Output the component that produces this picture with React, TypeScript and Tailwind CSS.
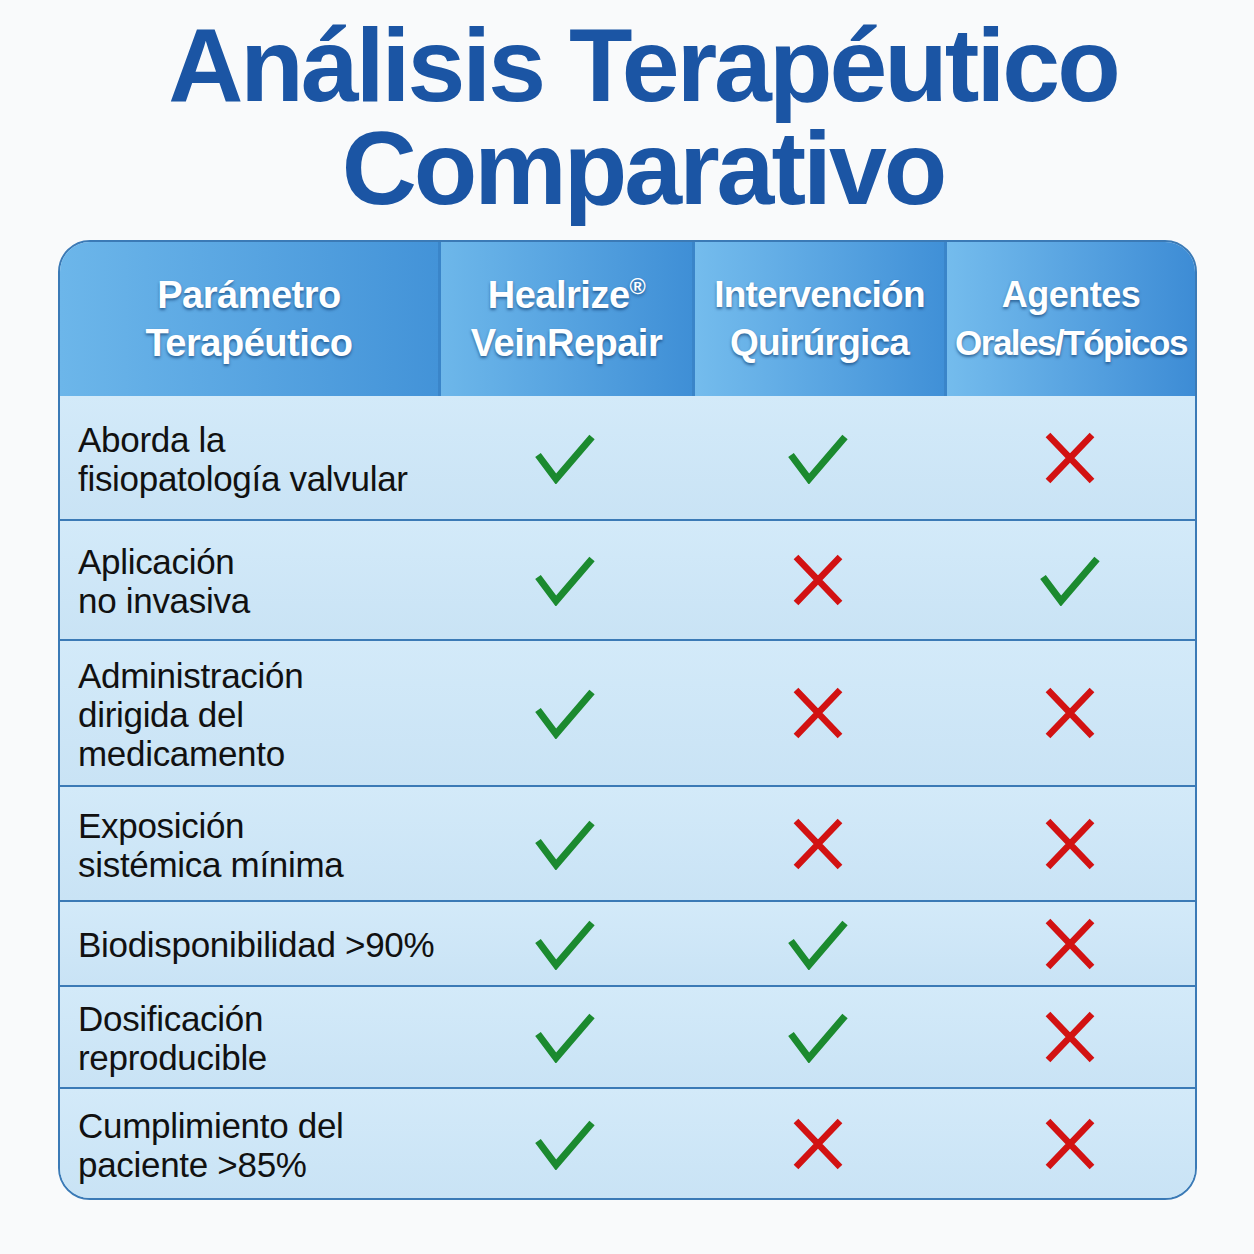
import React from 'react';

type Mark = 'yes' | 'no';

interface Row {
  label: string[];
  height: string;
  marks: [Mark, Mark, Mark];
}

// filas de la tabla comparativa
const rows: Row[] = [
  { label: ['Aborda la', 'fisiopatología valvular'], height: 'h-[125px]', marks: ['yes', 'yes', 'no'] },
  { label: ['Aplicación', 'no invasiva'], height: 'h-[120px]', marks: ['yes', 'no', 'yes'] },
  { label: ['Administración', 'dirigida del', 'medicamento'], height: 'h-[146px]', marks: ['yes', 'no', 'no'] },
  { label: ['Exposición', 'sistémica mínima'], height: 'h-[115px]', marks: ['yes', 'no', 'no'] },
  { label: ['Biodisponibilidad >90%'], height: 'h-[85px]', marks: ['yes', 'yes', 'no'] },
  { label: ['Dosificación', 'reproducible'], height: 'h-[102px]', marks: ['yes', 'yes', 'no'] },
  { label: ['Cumplimiento del', 'paciente >85%'], height: 'h-[109px]', marks: ['yes', 'no', 'no'] },
];

const CheckIcon = () => (
  <svg width="64" height="52" viewBox="0 0 64 52" fill="none">
    <path
      d="M5 23 L23 47 L59 5"
      stroke="#1b8a2f"
      strokeWidth={7}
      strokeLinecap="butt"
      strokeLinejoin="miter"
    />
  </svg>
);

const CrossIcon = () => (
  <svg width="52" height="54" viewBox="0 0 52 54" fill="none">
    <path
      d="M4 4 L48 50 M48 4 L4 50"
      stroke="#d21212"
      strokeWidth={6.5}
      strokeLinecap="butt"
    />
  </svg>
);

const headerText = 'text-white font-bold leading-[48px] [text-shadow:0_2px_3px_rgba(0,40,90,0.55)]';

const App = () => {
  return (
    <div
      className="w-[1254px] h-[1254px] bg-[#f9fafb] pt-[14px]"
      style={{ fontFamily: '"Liberation Sans", Arial, sans-serif' }}
    >
      {/* título */}
      <h1 className="pl-8 text-center text-[104px] leading-[103px] font-bold tracking-[-3px] text-[#1b55a4]">
        <div>Análisis Terapéutico</div>
        <div>Comparativo</div>
      </h1>

      {/* tabla */}
      <div className="mt-[20px] ml-[58px] w-[1139px] border-2 border-[#3b7ab6] rounded-[32px] overflow-hidden bg-[#cde6f7]">
        <div className="grid grid-cols-[378px_254px_252px_1fr] h-[154px]">
          <div className="flex flex-col items-center justify-center bg-gradient-to-r from-[#6cb6ea] to-[#4393d8]">
            <span className={`${headerText} text-[38px] tracking-[-0.5px]`}>Parámetro</span>
            <span className={`${headerText} text-[38px] tracking-[-0.5px]`}>Terapéutico</span>
          </div>
          <div className="flex flex-col items-center justify-center border-l-[3px] border-[#3a85c9] bg-gradient-to-r from-[#6db7ea] to-[#3f8fd6]">
            <span className={`${headerText} text-[38px] tracking-[-0.5px]`}>
              Healrize<span className="relative -top-[14px] text-[22px] leading-none">®</span>
            </span>
            <span className={`${headerText} text-[38px] tracking-[-0.5px]`}>VeinRepair</span>
          </div>
          <div className="flex flex-col items-center justify-center border-l-[3px] border-[#3a85c9] bg-gradient-to-r from-[#74bced] to-[#4090d7]">
            <span className={`${headerText} text-[37px] tracking-[-0.8px]`}>Intervención</span>
            <span className={`${headerText} text-[37px] tracking-[-0.8px]`}>Quirúrgica</span>
          </div>
          <div className="flex flex-col items-center justify-center border-l-[3px] border-[#3a85c9] bg-gradient-to-r from-[#74bced] to-[#3d8cd5]">
            <span className={`${headerText} text-[36px] tracking-[-0.5px]`}>Agentes</span>
            <span className={`${headerText} text-[35px] tracking-[-1.5px]`}>Orales/Tópicos</span>
          </div>
        </div>

        {rows.map((row, i) => (
          <div
            key={i}
            className={`grid grid-cols-[378px_254px_252px_1fr] bg-gradient-to-b from-[#d3eaf9] to-[#c9e3f5] ${row.height} ${
              i < rows.length - 1 ? 'border-b-2 border-[#3b7ab6]' : ''
            }`}
          >
            <div className="flex flex-col justify-center pl-[18px] pt-[2px] whitespace-nowrap text-[35px] leading-[39px] tracking-[-0.3px] text-[#111]">
              {row.label.map((line) => (
                <span key={line}>{line}</span>
              ))}
            </div>
            {row.marks.map((m, j) => (
              <div key={j} className="flex items-center justify-center">
                {m === 'yes' ? <CheckIcon /> : <CrossIcon />}
              </div>
            ))}
          </div>
        ))}
      </div>
    </div>
  );
};

export default App;
